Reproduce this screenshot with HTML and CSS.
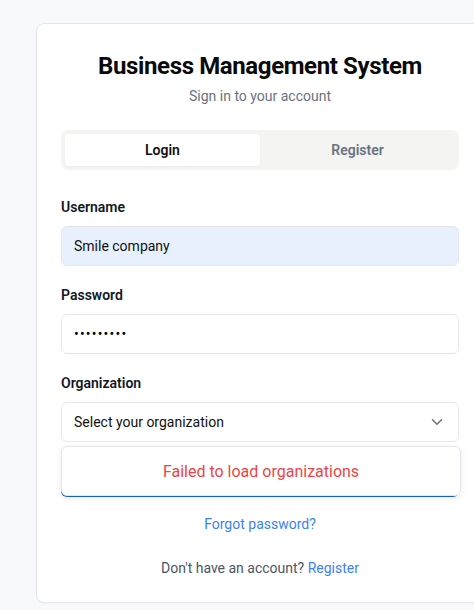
FILE: index.html
```html
<!DOCTYPE html>
<html lang="en">
<head>
<meta charset="utf-8">
<title>Business Management System</title>
<link rel="stylesheet" href="styles.css">
</head>
<body>
<main class="card">
  <header class="head">
    <h1 class="title">Business Management System</h1>
    <p class="subtitle">Sign in to your account</p>
  </header>
  <div class="tabs">
    <button class="tab tab-active" type="button">Login</button>
    <button class="tab" type="button">Register</button>
  </div>
  <form class="form">
    <div class="field">
      <label class="label" for="u">Username</label>
      <input class="input input-filled" id="u" type="text" value="Smile company">
    </div>
    <div class="field">
      <label class="label" for="p">Password</label>
      <input class="input input-pass" id="p" type="password" value="123456789">
    </div>
    <div class="field field-last">
      <span class="label">Organization</span>
      <div class="select-wrap">
        <div class="select">
          <span>Select your organization</span>
          <svg class="chev" width="12" height="8" viewBox="0 0 12 8" fill="none"><path d="M1.5 1.75 6 6.25l4.5-4.5" stroke="#6b7280" stroke-width="1.5" stroke-linecap="round" stroke-linejoin="round"/></svg>
        </div>
        <div class="menu">Failed to load organizations</div>
      </div>
    </div>
    <button class="submit" type="button" aria-label="Sign In"></button>
  </form>
  <a class="forgot" href="#">Forgot password?</a>
  <p class="foot">Don't have an account? <a class="link" href="#">Register</a></p>
</main>
</body>
</html>
```
FILE: styles.css
```css
html, body {
  margin: 0;
  overflow: hidden;
}
body {
  background: #f8f9fa;
  font-family: Roboto, "Liberation Sans", sans-serif;
  color: #111827;
  height: 610px;
}
.card {
  box-sizing: border-box;
  width: 448px;
  margin: 23px 0 0 36px;
  background: #fff;
  border: 1px solid #e5e7eb;
  border-radius: 8px;
  padding: 26px 24px 24px;
  box-shadow: 0 1px 2px rgba(0,0,0,0.03);
}
.head {
  text-align: center;
}
.title {
  margin: 0;
  font-size: 24px;
  line-height: 32px;
  font-weight: 700;
  letter-spacing: -0.38px;
  color: #0a0a0a;
}
.subtitle {
  margin: 4px 0 0;
  font-size: 14px;
  line-height: 20px;
  color: #6b7280;
}
.tabs {
  margin-top: 24px;
  display: grid;
  grid-template-columns: 1fr 1fr;
  gap: 0;
  padding: 4px;
  background: #f4f4f2;
  border-radius: 7px;
}
.tab {
  height: 32px;
  border: 0;
  border-radius: 4px;
  background: transparent;
  font-family: inherit;
  font-size: 14px;
  font-weight: 600;
  color: #6b7280;
  padding: 0;
}
.tab-active {
  background: #fff;
  color: #111;
  box-shadow: 0 1px 2px rgba(0,0,0,0.04);
}
.form {
  margin-top: 27px;
}
.field {
  margin-bottom: 19px;
}
.field-last {
  margin-bottom: 0;
}
.label {
  display: block;
  font-size: 14px;
  line-height: 20px;
  font-weight: 600;
  color: #111827;
  margin-bottom: 9px;
}
.input {
  box-sizing: border-box;
  display: block;
  width: 100%;
  height: 40px;
  padding: 0 12px;
  border: 1px solid #e5e7eb;
  border-radius: 6px;
  background: #fff;
  font-family: inherit;
  font-size: 14px;
  color: #111;
  outline: none;
}
.input-filled {
  background: #e8f0fe;
}
.input-pass {
  letter-spacing: 1.2px;
  color: #000;
}
.select-wrap {
  position: relative;
}
.select {
  box-sizing: border-box;
  height: 40px;
  padding: 0 15px 0 12px;
  border: 1px solid #e5e7eb;
  border-radius: 6px;
  display: flex;
  align-items: center;
  justify-content: space-between;
  font-size: 14px;
  color: #111;
}
.chev {
  display: block;
}
.menu {
  position: absolute;
  z-index: 2;
  left: 0;
  top: 44px;
  box-sizing: border-box;
  width: calc(100% + 2px);
  height: 50px;
  background: #fff;
  border: 1px solid #e5e7eb;
  border-radius: 6px;
  box-shadow: 0 2px 6px rgba(0,0,0,0.08);
  display: flex;
  align-items: center;
  justify-content: center;
  font-size: 16px;
  color: #ef4444;
}
.submit {
  display: block;
  width: 100%;
  height: 40px;
  margin-top: 15px;
  border: 0;
  border-radius: 6px;
  background: #1a62df;
}
.forgot {
  display: block;
  margin-top: 17px;
  text-align: center;
  font-size: 14px;
  line-height: 20px;
  color: #3b82f6;
  text-decoration: none;
}
.foot {
  margin: 24px 0 0;
  text-align: center;
  font-size: 14px;
  line-height: 20px;
  color: #4b5563;
}
.link {
  color: #3b82f6;
  text-decoration: none;
}
```
